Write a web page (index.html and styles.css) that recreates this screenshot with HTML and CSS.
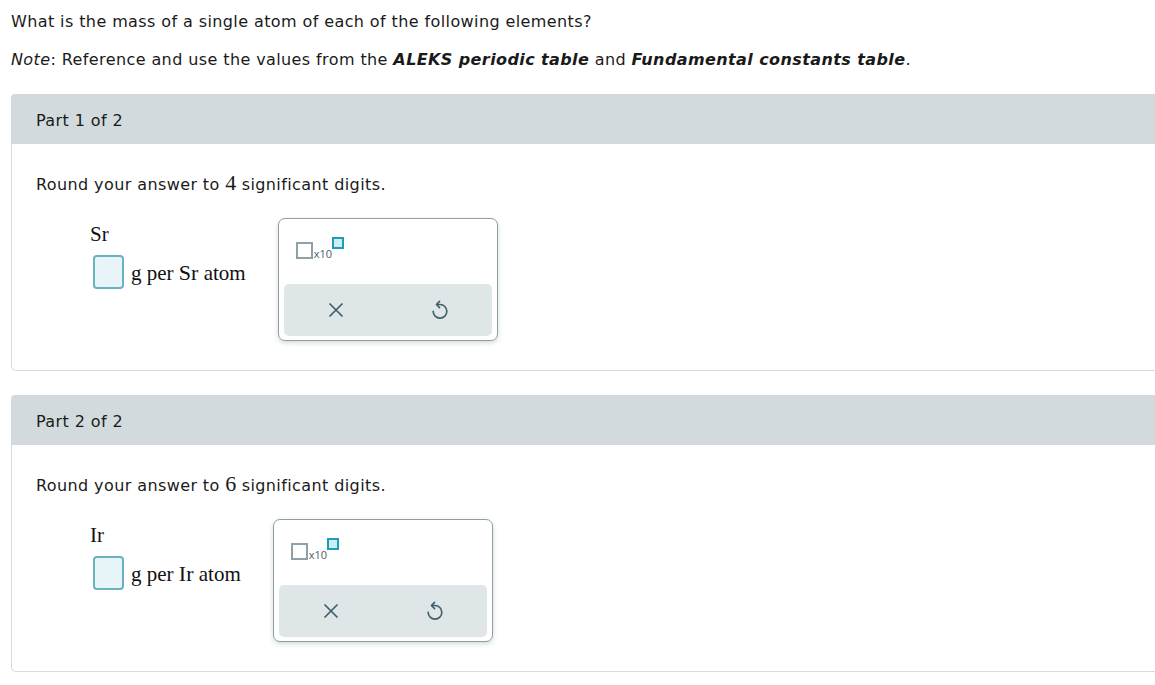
FILE: index.html
```html
<!DOCTYPE html>
<html>
<head>
<meta charset="utf-8">
<link rel="stylesheet" href="styles.css">
</head>
<body>
<p class="q">What is the mass of a single atom of each of the following elements?</p>
<p class="q note"><i>Note</i>: Reference and use the values from the <b><i>ALEKS periodic table</i></b> and <b><i>Fundamental constants table</i></b>.</p>

<section class="panel">
  <div class="panel-head">Part 1 of 2</div>
  <div class="panel-body">
    <p class="round">Round your answer to <span class="num">4</span> significant digits.</p>
    <div class="answer">
      <div class="expr">
        <div class="elem">Sr</div>
        <div class="row">
          <span class="input"></span>
          <span class="unit">g per <span class="sym">Sr</span> atom</span>
        </div>
      </div>
      <div class="popup">
        <div class="sci">
          <span class="base"></span><span class="x10">x10</span><span class="exp"></span>
        </div>
        <div class="bar">
          <span class="btn"><svg width="16" height="16" viewBox="0 0 16 16"><path d="M1.5 1.5 L14.5 14.5 M14.5 1.5 L1.5 14.5" stroke="#3f5f6b" stroke-width="1.7" fill="none"/></svg></span>
          <span class="btn"><svg width="20" height="22" viewBox="0 0 16 18"><path d="M5.5 4.5 H8 A5.6 5.6 0 1 1 2.4 10.1" stroke="#3f5f6b" stroke-width="1.35" fill="none" stroke-linecap="round"/><path d="M7.6 2 L5.1 4.5 L7.6 7" stroke="#3f5f6b" stroke-width="1.35" fill="none" stroke-linecap="round" stroke-linejoin="round"/></svg></span>
        </div>
      </div>
    </div>
  </div>
</section>

<section class="panel">
  <div class="panel-head">Part 2 of 2</div>
  <div class="panel-body">
    <p class="round">Round your answer to <span class="num">6</span> significant digits.</p>
    <div class="answer">
      <div class="expr">
        <div class="elem">Ir</div>
        <div class="row">
          <span class="input"></span>
          <span class="unit">g per <span class="sym">Ir</span> atom</span>
        </div>
      </div>
      <div class="popup">
        <div class="sci">
          <span class="base"></span><span class="x10">x10</span><span class="exp"></span>
        </div>
        <div class="bar">
          <span class="btn"><svg width="16" height="16" viewBox="0 0 16 16"><path d="M1.5 1.5 L14.5 14.5 M14.5 1.5 L1.5 14.5" stroke="#3f5f6b" stroke-width="1.7" fill="none"/></svg></span>
          <span class="btn"><svg width="20" height="22" viewBox="0 0 16 18"><path d="M5.5 4.5 H8 A5.6 5.6 0 1 1 2.4 10.1" stroke="#3f5f6b" stroke-width="1.35" fill="none" stroke-linecap="round"/><path d="M7.6 2 L5.1 4.5 L7.6 7" stroke="#3f5f6b" stroke-width="1.35" fill="none" stroke-linecap="round" stroke-linejoin="round"/></svg></span>
        </div>
      </div>
    </div>
  </div>
</section>
</body>
</html>
```

FILE: styles.css
```css
html, body {
  margin: 0;
  padding: 0;
  background: #fff;
}
body {
  padding-left: 11px;
  font-family: "DejaVu Sans", Verdana, sans-serif;
  font-size: 16px;
  letter-spacing: 0.4px;
  color: #1a1a1a;
  overflow: hidden;
}
.q {
  margin: 12px 0 0 0;
  line-height: 20px;
}
.q.note {
  margin-top: 18px;
}
.panel {
  margin-top: 24px;
}
.panel + .panel {
  margin-top: 24px;
}
.panel-head {
  height: 50px;
  box-sizing: border-box;
  padding-top: 2px;
  background: #d2dadd;
  border-radius: 4px 0 0 0;
  display: flex;
  align-items: center;
  padding-left: 25px;
}
.panel-body {
  border: 1px solid #d5dce0;
  border-top: none;
  border-right: none;
  border-radius: 0 0 0 5px;
  padding: 29px 0 29px 24px;
}
.round {
  margin: 0;
  line-height: 24px;
}
.num {
  font-family: "Liberation Serif", "Times New Roman", serif;
  font-size: 22px;
  line-height: 16px;
  letter-spacing: 0;
}
.answer {
  margin: 21px 0 0 54px;
  display: flex;
  align-items: flex-start;
}
.expr {
  padding-top: 4px;
  font-family: "Liberation Serif", "Times New Roman", serif;
  letter-spacing: 0;
  color: #111;
}
.elem {
  font-size: 21px;
  line-height: 24px;
}
.row {
  margin-top: 9px;
  display: flex;
  align-items: center;
}
.input {
  display: block;
  width: 27px;
  height: 30px;
  margin-left: 3px;
  border: 2px solid #6ab1c1;
  border-radius: 4px;
  background: #e7f5f9;
}
.unit {
  margin-left: 7px;
  font-size: 21px;
  line-height: 22px;
  padding-top: 2px;
}
.sym {
  font-size: 22px;
}
.popup {
  margin-left: 32px;
  width: 218px;
  height: 121px;
  border: 1px solid #8d9fa5;
  border-radius: 7px;
  background: #fff;
  box-shadow: 0 2px 5px rgba(60, 80, 90, 0.22);
  display: flex;
  flex-direction: column;
}
.sci {
  display: flex;
  align-items: flex-end;
  height: 22px;
  margin: 18px 0 0 17px;
}
.base {
  display: block;
  width: 13px;
  height: 13px;
  border: 2px solid #8fa1a7;
}
.x10 {
  font-family: "Open Sans", "DejaVu Sans", sans-serif;
  font-size: 11px;
  line-height: 11px;
  letter-spacing: 0;
  color: #4a5e66;
  margin-left: 1px;
}
.exp {
  display: block;
  align-self: flex-start;
  width: 8px;
  height: 8px;
  border: 2px solid #1f9db3;
  background: #cbeef4;
}
.bar {
  margin: 25px 5px 0 5px;
  height: 52px;
  background: #dfe6e8;
  border-radius: 5px;
  display: flex;
}
.btn {
  flex: 1;
  display: flex;
  align-items: center;
  justify-content: center;
}
```
